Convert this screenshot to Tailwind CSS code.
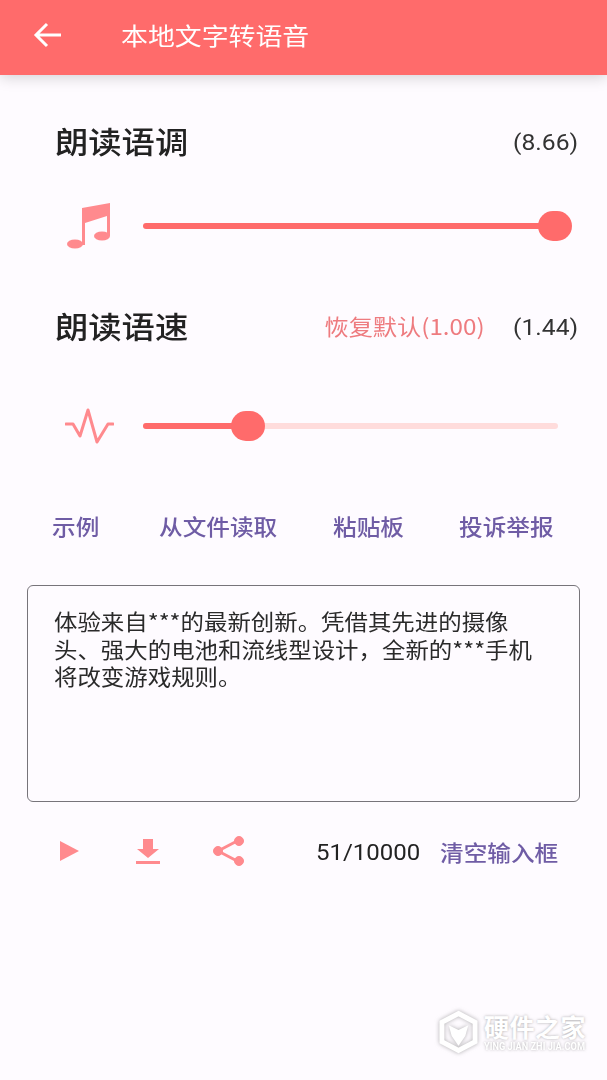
<!DOCTYPE html>
<html lang="zh">
<head>
<meta charset="utf-8">
<script src="https://cdn.jsdelivr.net/npm/@tailwindcss/browser@4"></script>
</head>
<body class="m-0">
<div class="relative w-[607px] h-[1080px] overflow-hidden bg-[#fefbff] font-['Noto_Sans_CJK_SC','Noto_Sans',sans-serif] text-[#1c1b1f]">
  <header class="flex items-center h-[75px] bg-[#ff6b6b] shadow-[0_2px_14px_rgba(0,0,0,0.18)] pl-[33px] pb-[5px]">
    <svg class="w-[30px] h-[30px]" viewBox="0 0 30 30" fill="none" stroke="#fff" stroke-width="3"><path d="M28 15H3M14 4 3 15l11 11"/></svg>
    <span class="ml-[58px] text-[24px] origin-left scale-x-[1.12] text-white leading-none">本地文字转语音</span>
  </header>

  <section class="flex items-center justify-between pl-[55px] pr-[29px] pt-[38px] h-[91px]">
    <h2 class="text-[30px] origin-left scale-x-[1.11] leading-none font-medium text-[#222]">朗读语调</h2>
    <span class="mt-[6px] text-[22px] origin-right scale-x-[1.12] leading-none font-['Roboto',sans-serif] text-[#333]">(8.66)</span>
  </section>

  <div class="flex items-center mt-[30px] h-[60px] pl-[66px]">
    <svg class="w-[46px] h-[48px]" viewBox="0 0 46 48" fill="#ff8a8e"><path d="M16 6 44 1v33h-3V14L19 21v22h-3z"/><ellipse cx="9" cy="42" rx="8" ry="4.500"/><ellipse cx="36" cy="34" rx="8" ry="4.500"/></svg>
    <div class="relative ml-[31px] w-[415px] h-[6px] rounded-full bg-[#ff6b6b]">
      <div class="absolute right-[-14px] top-[-12px] w-[34px] h-[30px] rounded-full bg-[#ff6b6b]"></div>
    </div>
  </div>

  <section class="flex items-center pl-[55px] pr-[29px] mt-[41px] h-[56px]">
    <h2 class="text-[30px] origin-left scale-x-[1.11] leading-none font-medium text-[#222]">朗读语速</h2>
    <span class="ml-auto mr-[6px] text-[22px] origin-right scale-x-[1.1] leading-none text-[#ee7b7f]">恢复默认(1.00)</span>
    <span class="ml-[29px] mt-[6px] text-[22px] origin-right scale-x-[1.12] leading-none font-['Roboto',sans-serif] text-[#333]">(1.44)</span>
  </section>

  <div class="flex items-center mt-[43px] h-[60px] pl-[65px]">
    <svg class="w-[49px] h-[36px]" viewBox="0 0 49 36" fill="none" stroke="#ff8a8e" stroke-width="3" stroke-linecap="round" stroke-linejoin="round"><path d="M1 16h7l7 12L23 2l9 32 11-18h5"/></svg>
    <div class="relative ml-[29px] w-[415px] h-[6px] rounded-full bg-[#ffdcdc]">
      <div class="w-[104px] h-full rounded-full bg-[#ff6b6b]"></div>
      <div class="absolute left-[88px] top-[-12px] w-[34px] h-[30px] rounded-full bg-[#ff6b6b]"></div>
    </div>
  </div>

  <nav class="flex items-center mt-[55px] pl-[52px] h-[30px] text-[21.500px] leading-none font-medium text-[#6f5ca5]">
    <span class="w-[107px]"><span class="inline-block origin-left scale-x-[1.1]">示例</span></span>
    <span class="w-[174px]"><span class="inline-block origin-left scale-x-[1.1]">从文件读取</span></span>
    <span class="w-[126px]"><span class="inline-block origin-left scale-x-[1.1]">粘贴板</span></span>
    <span class="inline-block origin-left scale-x-[1.1]">投诉举报</span>
  </nav>

  <div class="mt-[44px] mx-[27px] w-[553px] h-[217px] rounded-[6px] border-[1.500px] border-[#77747a] pl-[26px] pt-[21px] text-[21.300px] leading-[27.500px] text-[#2a2a2a] whitespace-nowrap">
    <div class="origin-left scale-x-[1.1]">体验来自***的最新创新。凭借其先进的摄像<br>头、强大的电池和流线型设计，全新的***手机<br>将改变游戏规则。</div>
  </div>

  <div class="flex items-center mt-[31px] h-[36px]">
    <svg class="ml-[60px] w-[19px] h-[20px]" viewBox="0 0 19 20" fill="#ff8a8e"><path d="M0 0 19 10 0 20z"/></svg>
    <svg class="ml-[57px] w-[25px] h-[25px]" viewBox="0 0 25 25" fill="#ff8a8e"><path d="M7 0h10v10h6L12 19 1 10h6zM0 22h24v3H0z"/></svg>
    <svg class="ml-[52px] w-[32px] h-[30px]" viewBox="0 0 32 30" fill="#ff8a8e" stroke="#ff8a8e"><path d="M5 15 26 4M5 15l21 11" stroke-width="3" fill="none"/><circle cx="26" cy="5" r="4.500"/><circle cx="5" cy="15" r="4.500"/><circle cx="26" cy="25" r="4.500"/></svg>
    <span class="ml-[71px] mt-[4px] text-[22px] origin-left scale-x-[1.09] leading-none font-['Roboto',sans-serif] text-[#222]">51/10000</span>
    <span class="ml-[28px] mt-[2px] text-[21.500px] origin-left scale-x-[1.1] leading-none font-medium text-[#6f5ca5]">清空输入框</span>
  </div>

  <div class="absolute left-[439px] top-[1010px] flex items-center gap-[6px] text-white [text-shadow:0_0_3px_rgba(120,120,120,0.6)]">
    <svg class="w-[39px] h-[44px] drop-shadow-[0_0_2px_rgba(120,120,120,0.6)]" viewBox="0 0 40 44"><path d="M20 3 37 12v20L20 41 3 32V12z" fill="none" stroke="#fff" stroke-width="5"/><path d="M10 15l10 5 10-5-3 11-7 10-7-10z" fill="#fff"/></svg>
    <div class="flex flex-col">
      <span class="text-[25px] leading-[30px] tracking-[0.500px] font-bold">硬件之家</span>
      <span class="text-[10.500px] leading-[12px] origin-left scale-x-[0.88] font-['Roboto',sans-serif] font-bold whitespace-nowrap">YING JIAN ZHI JIA.COM</span>
    </div>
  </div>
</div>
</body>
</html>
